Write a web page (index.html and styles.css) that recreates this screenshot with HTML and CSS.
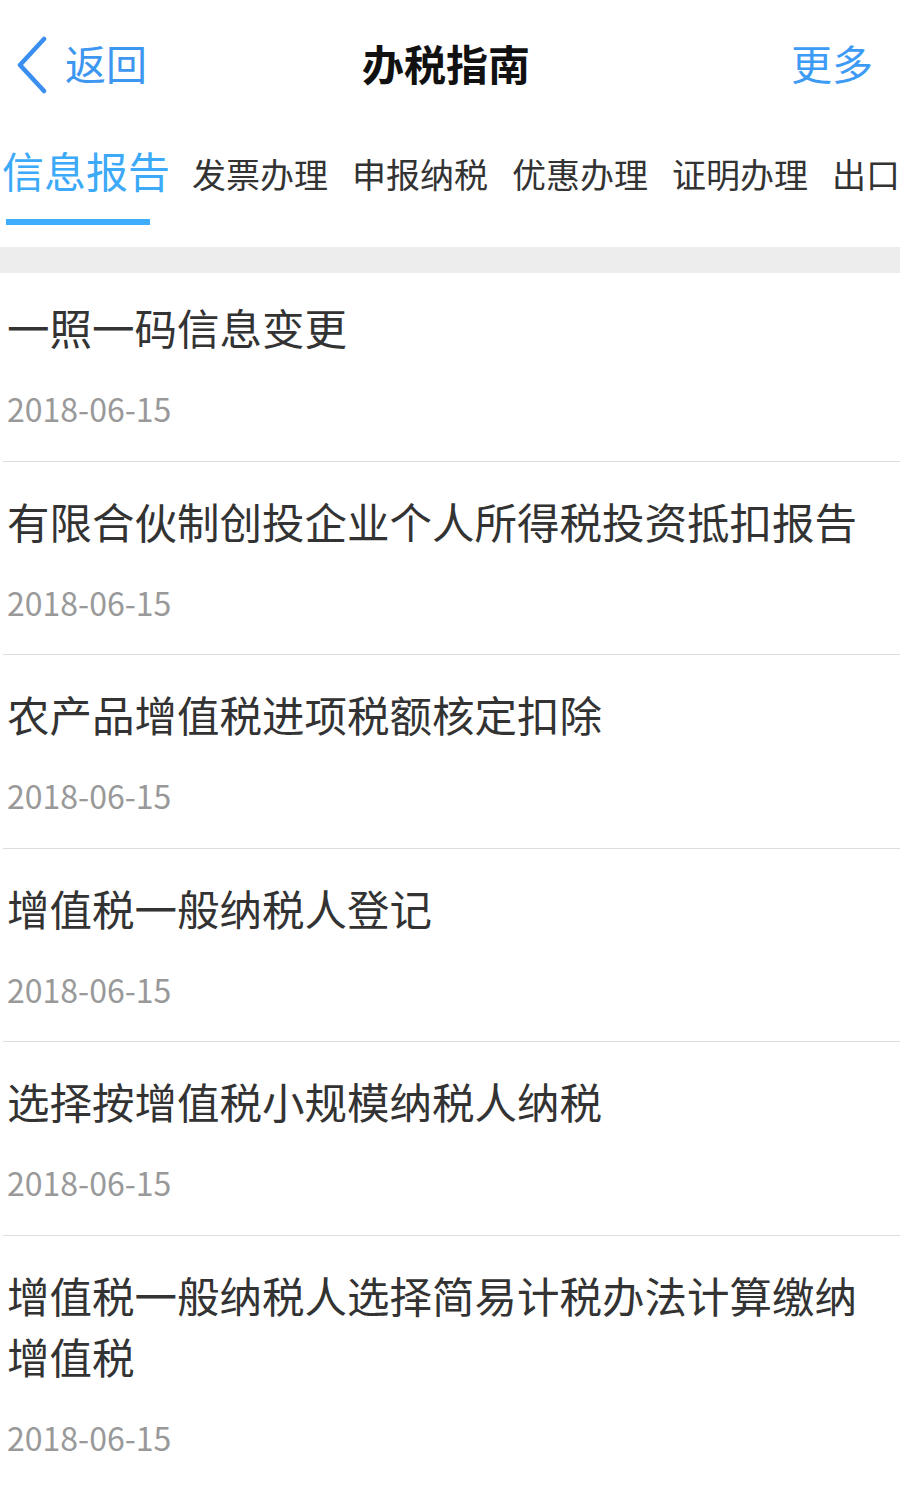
FILE: index.html
```html
<!DOCTYPE html>
<html lang="zh-CN">

<head>
    <meta charset="UTF-8">
    <meta name="viewport" content="width=device-width, initial-scale=1.0">
    <title>办税指南</title>
    <link rel="stylesheet" href="styles.css">
</head>

<body>
    <header class="navbar">
        <a class="nav-back" href="#">
            <svg class="back-icon" viewBox="0 0 32 58" width="32" height="58">
                <polyline points="28,3 4,29 28,55" fill="none" stroke="#3a8ef0" stroke-width="4.5"
                    stroke-linecap="round" stroke-linejoin="round" />
            </svg>
            <span>返回</span>
        </a>
        <h1 class="nav-title">办税指南</h1>
        <a class="nav-more" href="#">更多</a>
    </header>

    <nav class="tabs">
        <div class="tab active">
            <span>信息报告</span>
            <i class="tab-bar"></i>
        </div>
        <div class="tab"><span>发票办理</span></div>
        <div class="tab"><span>申报纳税</span></div>
        <div class="tab"><span>优惠办理</span></div>
        <div class="tab"><span>证明办理</span></div>
        <div class="tab"><span>出口退税</span></div>
    </nav>

    <div class="band"></div>

    <ul class="guide-list">
        <li class="guide-item">
            <div class="guide-title">一照一码信息变更</div>
            <div class="guide-date">2018-06-15</div>
        </li>
        <li class="guide-item">
            <div class="guide-title">有限合伙制创投企业个人所得税投资抵扣报告</div>
            <div class="guide-date">2018-06-15</div>
        </li>
        <li class="guide-item">
            <div class="guide-title">农产品增值税进项税额核定扣除</div>
            <div class="guide-date">2018-06-15</div>
        </li>
        <li class="guide-item">
            <div class="guide-title">增值税一般纳税人登记</div>
            <div class="guide-date">2018-06-15</div>
        </li>
        <li class="guide-item">
            <div class="guide-title">选择按增值税小规模纳税人纳税</div>
            <div class="guide-date">2018-06-15</div>
        </li>
        <li class="guide-item">
            <div class="guide-title">增值税一般纳税人选择简易计税办法计算缴纳增值税</div>
            <div class="guide-date">2018-06-15</div>
        </li>
    </ul>
</body>

</html>
```

FILE: styles.css
```css
body {
    margin: 0;
    background-color: #ffffff;
    font-family: "Noto Sans CJK SC", "Noto Sans", sans-serif;
    color: #333333;
    overflow-x: hidden;
}

a {
    text-decoration: none;
}

/* Barra superior */
.navbar {
    height: 130px;
    padding-bottom: 6px;
    box-sizing: border-box;
    display: grid;
    grid-template-columns: 1fr auto 1fr;
    align-items: center;
}

.nav-back {
    display: flex;
    align-items: center;
    padding-left: 16px;
    color: #3d96f0;
    font-size: 41px;
    line-height: 1;
}

.back-icon {
    margin: 6px 17px 0 0;
}

.nav-title {
    margin: 0 8px 0 0;
    font-size: 42px;
    font-weight: bold;
    color: #111111;
}

.nav-more {
    justify-self: end;
    padding-right: 27px;
    color: #3d9bf5;
    font-size: 41px;
}

/* Pestañas */
.tabs {
    height: 117px;
    display: flex;
    align-items: baseline;
    gap: 24px;
    padding-left: 2px;
    padding-top: 14px;
    box-sizing: border-box;
    white-space: nowrap;
    overflow: hidden;
}

.tab {
    display: flex;
    flex-direction: column;
    flex-shrink: 0;
    font-size: 34px;
    line-height: 52px;
    color: #333333;
}

.tab.active {
    font-size: 42px;
    color: #3caaf8;
    margin-right: -2px;
}

.tab-bar {
    display: block;
    width: 144px;
    height: 6px;
    margin: 23px 0 0 4px;
    background-color: #3eaefc;
}

.band {
    height: 26px;
    background-color: #ededed;
}

/* Lista */
.guide-list {
    list-style: none;
    margin: 0;
    padding: 0 0 0 3px;
}

.guide-item {
    padding: 28px 0 31.5px 4px;
    border-bottom: 1px solid #dddddd;
}

.guide-item:first-child {
    padding-top: 23px;
}

.guide-item:last-child {
    border-bottom: none;
}

.guide-title {
    font-size: 42.5px;
    line-height: 61px;
    color: #333333;
    padding-right: 10px;
}

.guide-date {
    margin-top: 30px;
    font-size: 32px;
    line-height: 42px;
    color: #999999;
}
```
